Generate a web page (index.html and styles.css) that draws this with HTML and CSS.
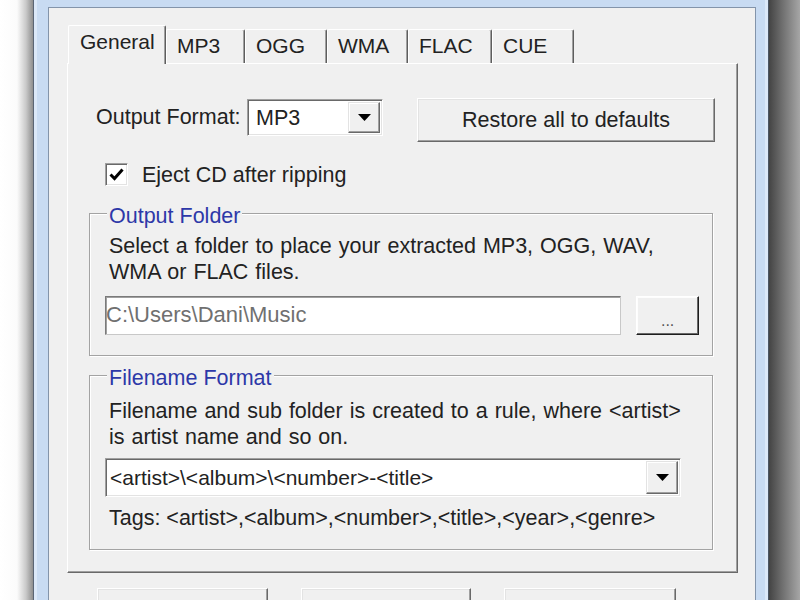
FILE: index.html
```html
<!DOCTYPE html>
<html>
<head>
<meta charset="utf-8">
<link rel="stylesheet" href="styles.css">
</head>
<body>
<div class="screen">
  <div class="window">
    <div class="client">
      <div class="tabs">
        <div class="tabstrip">
          <div class="tab sel">General</div>
          <div class="tab">MP3</div>
          <div class="tab">OGG</div>
          <div class="tab">WMA</div>
          <div class="tab">FLAC</div>
          <div class="tab">CUE</div>
        </div>
        <div class="panel">
          <div class="row1">
            <span class="lbl">Output Format:</span>
            <div class="combo small">
              <span class="val">MP3</span>
              <span class="ddbtn"><svg width="13" height="7" viewBox="0 0 13 7"><polygon points="0,0 13,0 6.5,7" fill="#000"/></svg></span>
            </div>
            <div class="btn restore">Restore all to defaults</div>
          </div>
          <div class="chk">
            <span class="box"><svg width="19" height="19" viewBox="0 0 19 19"><path d="M3.5 9.5 L7.5 13.5 L15.5 4.5" fill="none" stroke="#000" stroke-width="3"/></svg></span>
            <span class="chktext">Eject CD after ripping</span>
          </div>
          <fieldset class="group g1">
            <legend>Output Folder</legend>
            <p class="desc">Select a folder to place your extracted MP3, OGG, WAV,<br>WMA or FLAC files.</p>
            <div class="pathrow">
              <div class="edit">C:\Users\Dani\Music</div>
              <div class="btn dots">...</div>
            </div>
          </fieldset>
          <fieldset class="group g2">
            <legend>Filename Format</legend>
            <p class="desc">Filename and sub folder is created to a rule, where &lt;artist&gt;<br>is artist name and so on.</p>
            <div class="combo wide">
              <span class="val">&lt;artist&gt;\&lt;album&gt;\&lt;number&gt;-&lt;title&gt;</span>
              <span class="ddbtn"><svg width="13" height="7" viewBox="0 0 13 7"><polygon points="0,0 13,0 6.5,7" fill="#000"/></svg></span>
            </div>
            <p class="tags">Tags: &lt;artist&gt;,&lt;album&gt;,&lt;number&gt;,&lt;title&gt;,&lt;year&gt;,&lt;genre&gt;</p>
          </fieldset>
        </div>
      </div>
      <div class="buttons">
        <div class="btn bottom"></div>
        <div class="btn bottom"></div>
        <div class="btn bottom"></div>
      </div>
    </div>
  </div>
</div>
</body>
</html>
```

FILE: styles.css
```css
* { box-sizing: border-box; }
html, body { margin: 0; padding: 0; }
body {
  width: 800px;
  height: 600px;
  overflow: hidden;
  font-family: "Liberation Sans", Arial, sans-serif;
  font-size: 21px;
  color: #222;
}
.screen {
  width: 800px;
  height: 600px;
  overflow: hidden;
  display: flex;
  background: linear-gradient(to right, #fff 0px, #fbfbfb 17px, #c9c9c9 26px, #8e8e8e 33px, #8e8e8e 768px, #444 769px, #6e6e6e 782px, #a6a6a6 800px);
}
.window {
  margin-left: 33px;
  width: 736px;
  height: 660px;
  flex: none;
  border-left: 1px solid #5a6575;
  border-right: 1px solid #4b5563;
  padding: 7px 12px 0 14px;
  background: #c8dbf2;
  box-shadow: inset 3px 0 0 #dbe8f8, inset -3px 0 0 #dbe8f8;
}
.client {
  height: 660px;
  background: #f0f0f0;
  border: 1px solid #8394aa;
  padding-top: 17px;
}
.tabs {
  margin-left: 18px;
  width: 671px;
}
.tabstrip {
  display: grid;
  grid-template-columns: 98px 79px 82px 81px 84px 82px;
  align-items: end;
  height: 38px;
  padding-left: 1px;
}
.tab {
  height: 34px;
  padding: 3px 0 0 10px;
  line-height: 26px;
  border-top: 1px solid #fff;
  border-left: 1px solid #fff;
  border-right: 1px solid #5e5e5e;
  border-radius: 2px 2px 0 0;
  box-shadow: inset -1px 0 0 #a0a0a0;
  background: #f0f0f0;
}
.tab.sel {
  height: 39px;
  margin-bottom: -1px;
  padding-left: 11px;
  position: relative;
  z-index: 1;
}
.panel {
  height: 510px;
  border-top: 1px solid #fff;
  border-left: 1px solid #fff;
  border-right: 1px solid #696969;
  border-bottom: 1px solid #696969;
  box-shadow: inset -1px -1px 0 #a0a0a0;
  padding: 34px 0 0 21px;
  font-size: 21.5px;
}
.row1 {
  display: flex;
  align-items: flex-start;
  height: 44px;
  padding-left: 7px;
}
.lbl {
  width: 151px;
  line-height: 26px;
  margin-top: 6px;
  flex: none;
}
.combo {
  display: flex;
  background: #fff;
  border: 1px solid;
  border-color: #a0a0a0 #fff #fff #a0a0a0;
  box-shadow: inset 1px 1px 0 #696969, inset -1px -1px 0 #e3e3e3;
  padding: 2px;
  flex: none;
}
.combo .val {
  flex: 1;
  white-space: nowrap;
  overflow: hidden;
}
.combo.small {
  width: 136px;
  height: 37px;
  margin-top: 1px;
}
.combo.small .val { padding-left: 6px; line-height: 33px; }
.combo.wide {
  width: 576px;
  height: 39px;
  margin-top: 8px;
}
.combo.wide .val { padding-left: 2px; line-height: 33px; font-size: 21px; }
.ddbtn {
  width: 32px;
  flex: none;
  background: #f0f0f0;
  border: 1px solid;
  border-color: #e3e3e3 #696969 #696969 #e3e3e3;
  box-shadow: inset -1px -1px 0 #a0a0a0, inset 1px 1px 0 #fff;
  display: flex;
  align-items: center;
  justify-content: center;
}
.btn {
  background: #f0f0f0;
  border: 1px solid;
  border-color: #fff #696969 #696969 #fff;
  box-shadow: inset -1px -1px 0 #a0a0a0, inset 1px 1px 0 #e3e3e3;
  display: flex;
  align-items: center;
  justify-content: center;
  color: #222;
}
.restore {
  width: 298px;
  height: 44px;
  margin-left: 34px;
  flex: none;
}
.chk {
  display: flex;
  align-items: center;
  margin: 21px 0 0 16px;
  height: 23px;
}
.box {
  width: 23px;
  height: 23px;
  background: #fff;
  border: 1px solid;
  border-color: #a0a0a0 #fff #fff #a0a0a0;
  box-shadow: inset 1px 1px 0 #696969, inset -1px -1px 0 #e3e3e3;
  display: flex;
  align-items: center;
  justify-content: center;
  flex: none;
}
.chktext {
  margin-left: 14px;
  line-height: 26px;
}
.group {
  margin: 0;
  width: 624px;
  border: 1px solid #a3a3a3;
  box-shadow: inset 1px 1px 0 #fff, 1px 1px 0 #fff;
  padding: 4px 13px 20px 15px;
  min-width: 0;
}
.group legend {
  padding: 6px 2px 0;
  margin-left: 2px;
  line-height: 26px;
  color: #2d38a8;
  background: #f0f0f0;
}
.g1 { margin-top: 11px; }
.g2 { margin-top: 3px; padding-top: 7px; padding-bottom: 18px; }
.desc {
  margin: 0 0 0 4px;
  line-height: 26px;
  white-space: nowrap;
  word-spacing: 1px;
}
.pathrow {
  display: flex;
  margin-top: 11px;
  height: 39px;
  column-gap: 15px;
}
.edit {
  width: 518px;
  height: 39px;
  background: #fff;
  border: 1px solid;
  border-color: #7a7a7a #c8c8c8 #c8c8c8 #7a7a7a;
  box-shadow: inset 1px 1px 0 #a0a0a0;
  color: #707070;
  padding-left: 0;
  line-height: 35px;
  font-size: 22px;
}
.dots {
  width: 63px;
  height: 39px;
  color: #555;
  border-color: #fff #1e1e1e #1e1e1e #fff;
  box-shadow: inset -1px -1px 0 #696969, inset 1px 1px 0 #fdfdfd;
  font-size: 16px;
  padding-top: 10px;
}
.tags {
  margin: 8px 0 0 4px;
  line-height: 26px;
  white-space: nowrap;
}
.buttons {
  display: grid;
  grid-template-columns: 171px 170px 172px;
  column-gap: 33px;
  margin: 15px 0 0 48px;
}
.bottom {
  height: 40px;
}
```
